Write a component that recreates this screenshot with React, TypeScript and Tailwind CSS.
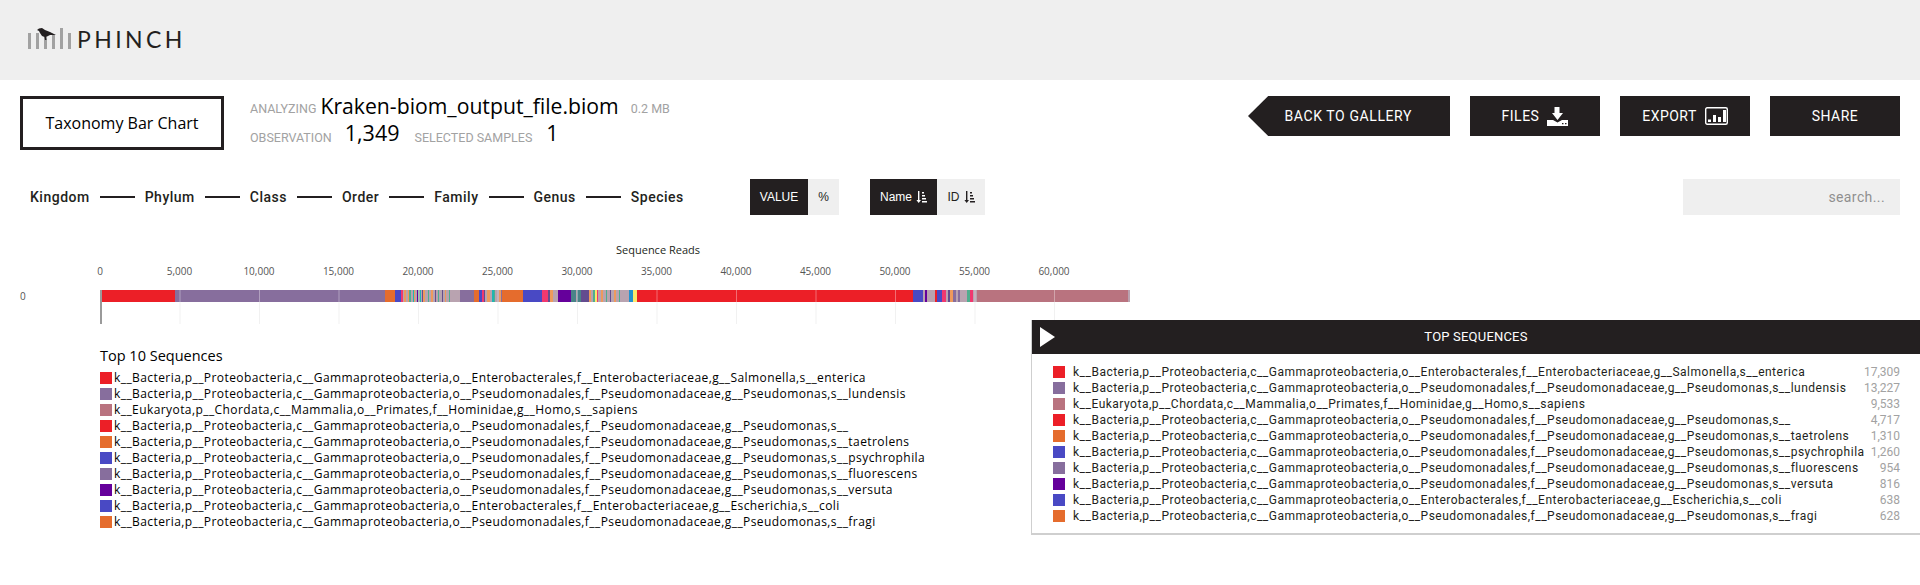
const ink = "bg-[#231f20]";

const ranks = ["Kingdom", "Phylum", "Class", "Order", "Family", "Genus", "Species"];

const C = {
  red: "#ec1f27",
  violet: "#876e9d",
  rose: "#b9737f",
  orange: "#e56c2d",
  blue: "#4949c4",
  purple: "#65009b",
  teal: "#4a8388",
  plum: "#644c8f",
  pink: "#f0386f",
  sky: "#2492ce",
  yellow: "#fbe96b",
  peach: "#ee9a5c",
  mauve: "#b9a3b0",
  green: "#4fae8e",
  cyan: "#1fb5b3",
};

const rows: [string, string, string][] = [
  [C.red, "k__Bacteria,p__Proteobacteria,c__Gammaproteobacteria,o__Enterobacterales,f__Enterobacteriaceae,g__Salmonella,s__enterica", "17,309"],
  [C.violet, "k__Bacteria,p__Proteobacteria,c__Gammaproteobacteria,o__Pseudomonadales,f__Pseudomonadaceae,g__Pseudomonas,s__lundensis", "13,227"],
  [C.rose, "k__Eukaryota,p__Chordata,c__Mammalia,o__Primates,f__Hominidae,g__Homo,s__sapiens", "9,533"],
  [C.red, "k__Bacteria,p__Proteobacteria,c__Gammaproteobacteria,o__Pseudomonadales,f__Pseudomonadaceae,g__Pseudomonas,s__", "4,717"],
  [C.orange, "k__Bacteria,p__Proteobacteria,c__Gammaproteobacteria,o__Pseudomonadales,f__Pseudomonadaceae,g__Pseudomonas,s__taetrolens", "1,310"],
  [C.blue, "k__Bacteria,p__Proteobacteria,c__Gammaproteobacteria,o__Pseudomonadales,f__Pseudomonadaceae,g__Pseudomonas,s__psychrophila", "1,260"],
  [C.violet, "k__Bacteria,p__Proteobacteria,c__Gammaproteobacteria,o__Pseudomonadales,f__Pseudomonadaceae,g__Pseudomonas,s__fluorescens", "954"],
  [C.purple, "k__Bacteria,p__Proteobacteria,c__Gammaproteobacteria,o__Pseudomonadales,f__Pseudomonadaceae,g__Pseudomonas,s__versuta", "816"],
  [C.blue, "k__Bacteria,p__Proteobacteria,c__Gammaproteobacteria,o__Enterobacterales,f__Enterobacteriaceae,g__Escherichia,s__coli", "638"],
  [C.orange, "k__Bacteria,p__Proteobacteria,c__Gammaproteobacteria,o__Pseudomonadales,f__Pseudomonadaceae,g__Pseudomonas,s__fragi", "628"],
];

// bar segments as [x offset from bar start, colour], each runs to the next one
const segs: [number, string][] = [
  [0, C.red], [75, C.violet], [285, C.orange], [295, C.blue], [301, C.pink], [303, C.mauve], [304, C.peach], [306, C.mauve],
  [308, C.peach], [309, C.green], [311, C.mauve], [313, C.cyan], [314, C.peach], [315, C.mauve], [317, C.purple], [318, C.green],
  [319, C.mauve], [320, C.cyan], [321, C.mauve], [322, C.plum], [323, C.peach], [325, C.mauve], [328, C.green], [329, C.mauve], [331, C.peach],
  [333, C.mauve], [335, C.plum], [336, C.mauve], [338, C.green], [339, C.mauve], [342, C.plum], [343, C.mauve], [345, C.peach], [346, C.mauve],
  [349, C.green], [350, C.mauve], [360, C.violet], [374, C.orange],
  [379, C.blue], [382, C.pink], [384, C.plum], [385, C.mauve], [387, C.peach], [390, C.mauve], [392, C.cyan],
  [394, C.green], [395, C.mauve], [399, C.peach], [401, C.violet], [402, C.orange], [423, C.blue], [442, C.pink],
  [448, C.plum], [450, C.peach], [453, C.mauve], [458, C.purple], [471, C.teal], [476, C.mauve],
  [477, C.teal], [481, C.plum], [489, C.peach], [491, C.mauve], [493, C.green], [495, C.yellow], [497, C.pink], [498, C.mauve],
  [501, C.peach], [503, C.mauve], [506, C.green], [507, C.mauve], [510, C.plum], [511, C.mauve], [514, C.peach],
  [516, C.mauve], [519, C.green], [520, C.mauve], [529, C.sky], [533, C.yellow], [537, C.red],
  [813, C.blue], [823, C.mauve], [825, C.purple], [827, C.mauve], [835, C.red], [837, C.blue], [842, C.pink], [846, C.mauve],
  [848, C.plum], [850, C.peach], [853, C.violet], [856, C.mauve], [858, C.violet], [860, C.mauve], [867, C.green], [870, C.pink], [873, C.mauve],
  [877, C.rose], [1028, C.mauve],
];
const barWidth = 1030;

const ticks = ["0", "5,000", "10,000", "15,000", "20,000", "25,000", "30,000", "35,000", "40,000", "45,000", "50,000", "55,000", "60,000"];

function SortIcon({ color }: { color: string }) {
  return (
    <svg width="11" height="12" viewBox="0 0 11 12" fill={color}>
      <path d="M2 0h1.4v9H5L2.7 12 .4 9H2z" />
      <path d="M6 1h2v1.4H6zM6 4h3v1.4H6zM6 7h4v1.4H6zM6 10h5v1.4H6z" />
    </svg>
  );
}

export default function App() {
  return (
    <div className="h-[585px] w-[1920px] overflow-hidden bg-white font-['Open_Sans',sans-serif] text-black">
      <header className="flex h-20 items-center bg-[#efefef] pl-7">
        <div className="flex h-7 items-end">
          <svg width="48" height="24" viewBox="0 0 48 24" className="mb-[5px]">
            <g fill="#a2a2a2">
              <rect x="0" y="8" width="3" height="16" />
              <rect x="8" y="8" width="3" height="16" />
              <rect x="16" y="12" width="3" height="12" />
              <rect x="24" y="10" width="3" height="14" />
              <rect x="32" y="3" width="3" height="21" />
              <rect x="40" y="8" width="3" height="16" />
            </g>
            <path d="M9 5l2-1.5L14 3l3 2 5 2 6 3-6 0-2 1-2 1 .5 3H17l-.5-3L14 11l-2-3-1-2z" fill="#231f20" />
          </svg>
          <span className="mb-[1px] ml-[1px] font-['Lato',sans-serif] text-[23px] leading-7 tracking-[3.4px] text-[#231f20]">PHINCH</span>
        </div>
      </header>

      <section className="flex items-start pt-4 pr-5 pl-5">
        <div className="flex h-[54px] w-[204px] items-center justify-center border-[3px] border-[#231f20] text-[16px]">
          Taxonomy Bar Chart
        </div>
        <div className="-mt-[2px] ml-[26px] font-['Roboto',sans-serif] text-[12.5px] text-[#a2a2a2]">
          <div className="flex h-[30px] items-center">
            <span>ANALYZING</span>
            <span className="mb-[7px] ml-[4px] font-['Open_Sans',sans-serif] text-[21.2px] text-black">Kraken-biom_output_file.biom</span>
            <span className="ml-3">0.2 MB</span>
          </div>
          <div className="flex h-[28px] items-center">
            <span>OBSERVATION</span>
            <span className="mb-[10px] ml-[13px] font-['Open_Sans',sans-serif] text-[21.5px] text-black">1,349</span>
            <span className="ml-[15px]">SELECTED SAMPLES</span>
            <span className="mb-[10px] ml-[14px] font-['Open_Sans',sans-serif] text-[21.5px] text-black">1</span>
          </div>
        </div>
        <div className="ml-auto flex gap-5 font-['Roboto',sans-serif] text-[14px] tracking-[0.5px] text-white">
          <div
            className={`flex h-10 w-[202px] items-center justify-end pr-[38px] tracking-[0.6px] ${ink} [clip-path:polygon(10%_0,100%_0,100%_100%,10%_100%,0_50%)]`}
          >
            BACK TO GALLERY
          </div>
          <div className={`flex h-10 w-[130px] items-center justify-center gap-2 ${ink}`}>
            FILES
            <svg width="21" height="19" viewBox="0 0 21 19" fill="white">
              <path d="M7.5 0h5v6H16l-5.5 7L5 6h2.5z" />
              <path fillRule="evenodd" d="M0 13h4l2 0 4.5 2.5L15 13h6v6H0zM15 16v1.2h1.5V16zM18 16v1.2h1.5V16z" />
            </svg>
          </div>
          <div className={`flex h-10 w-[130px] items-center justify-center gap-2 ${ink}`}>
            EXPORT
            <svg width="23" height="18" viewBox="0 0 23 18" fill="white">
              <rect x=".7" y=".7" width="21.6" height="16.6" rx="1.5" fill="none" stroke="white" strokeWidth="1.4" />
              <rect x="3" y="12.5" width="3" height="2.5" />
              <rect x="8" y="8" width="3" height="7" />
              <rect x="13" y="10" width="3" height="5" />
              <rect x="18" y="3" width="3" height="12" />
            </svg>
          </div>
          <div className={`flex h-10 w-[130px] items-center justify-center ${ink}`}>SHARE</div>
        </div>
      </section>

      <section className="mt-[27px] flex h-9 items-center pr-5 pl-[30px]">
        <div className="flex w-[720px] items-center font-['Roboto',sans-serif] text-[14px] font-medium tracking-[0.5px] text-[#231f20]">
          {ranks.map((r, i) => (
            <div key={r} className="flex items-center">
              <span>{r}</span>
              {i < ranks.length - 1 && <span className="mx-[10px] h-[2px] w-[35px] bg-[#231f20]" />}
            </div>
          ))}
        </div>
        <div className="flex h-9 font-['Liberation_Sans',sans-serif] text-[12px]">
          <div className={`flex w-[58px] items-center justify-center text-white ${ink}`}>VALUE</div>
          <div className="flex w-[31px] items-center justify-center bg-[#efefef] text-[#231f20]">%</div>
        </div>
        <div className="ml-[31px] flex h-9 font-['Liberation_Sans',sans-serif] text-[12px]">
          <div className={`flex w-[67px] items-center justify-center gap-1 text-white ${ink}`}>
            Name <SortIcon color="white" />
          </div>
          <div className="flex w-[48px] items-center justify-center gap-1 bg-[#efefef] text-[#231f20]">
            ID <SortIcon color="#231f20" />
          </div>
        </div>
        <div className="ml-auto flex h-9 w-[217px] items-center justify-end bg-[#efefef] pr-[15px] font-['Roboto',sans-serif] text-[14px] tracking-[0.4px] text-[#8f8f8f]">
          search...
        </div>
      </section>

      <section className="mt-[27px] h-[90px]">
        <div className="w-[1316px] text-center text-[11px] leading-4 text-[#231f20]">Sequence Reads</div>
        <div className="mt-[6px] flex h-[14px] pl-[100px] text-[10px] leading-[14px] text-[#555]">
          {ticks.map((t) => (
            <span key={t} className="w-[79.5px] shrink-0">
              <span className="inline-block w-0 whitespace-nowrap">
                <span className="inline-block -translate-x-1/2">{t}</span>
              </span>
            </span>
          ))}
        </div>
        <div className="mt-[12px] flex items-start">
          <span className="w-[100px] pl-5 text-[10px] leading-3 text-[#555]">0</span>
          <svg width="1040" height="34" viewBox="0 0 1040 34" className="block">
            {ticks.map((t, i) => (
              <rect key={t} x={i * 79.5} y="12" width="1" height="22" fill="#f1f1f1" />
            ))}
            {segs.map(([x, color], i) => {
              const next = i + 1 < segs.length ? segs[i + 1][0] : barWidth;
              return <rect key={i} x={x} y="0" width={next - x} height="12" fill={color} />;
            })}
            {ticks.map((t, i) => (
              <rect key={t} x={i * 79.5} y="0" width="1" height="12" fill="white" opacity="0.35" />
            ))}
            <rect x="0" y="0" width="2" height="34" fill="#9a9a9a" />
          </svg>
        </div>
      </section>

      <div className="flex items-start">
        <div className="mt-[14px] ml-[100px] w-[900px]">
          <h3 className="text-[14.5px] leading-5 text-black">Top 10 Sequences</h3>
          <div className="mt-[4px]">
            {rows.map(([color, name], i) => (
              <div key={i} className="flex h-4 items-center text-[12px] tracking-[0.42px]">
                <span className="h-3 w-3 shrink-0" style={{ backgroundColor: color }} />
                <span className="ml-[2px] whitespace-nowrap">{name}</span>
              </div>
            ))}
          </div>
        </div>
        <div className="absolute top-[320px] left-[1031px] h-[215px] w-[889px] border-b-2 border-l border-[#cfcfcf] bg-white font-['Roboto',sans-serif]">
          <div className={`flex h-[34px] items-center justify-center text-[13px] tracking-[0.2px] text-white ${ink}`}>
            <svg width="15" height="20" viewBox="0 0 15 20" fill="white" className="absolute left-2">
              <path d="M0 0l15 10L0 20z" />
            </svg>
            TOP SEQUENCES
          </div>
          <div className="pt-[10px] pr-[20px] pl-[21px]">
            {rows.map(([color, name, value], i) => (
              <div key={i} className="flex h-4 items-center text-[12px] text-[#231f20]">
                <span className="h-3 w-3 shrink-0" style={{ backgroundColor: color }} />
                <span className="ml-2 whitespace-nowrap tracking-[0.5px]">{name}</span>
                <span className="ml-auto text-[#a2a2a2]">{value}</span>
              </div>
            ))}
          </div>
        </div>
      </div>
    </div>
  );
}
